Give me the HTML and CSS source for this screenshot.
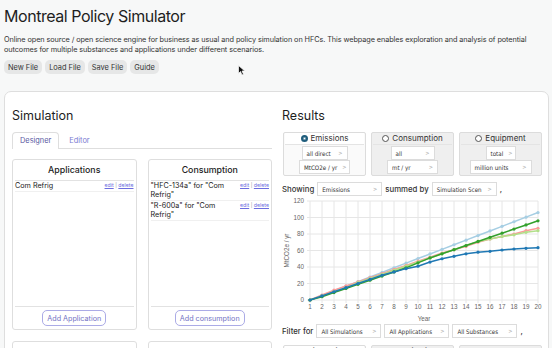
FILE: index.html
```html
<!DOCTYPE html>
<html>
<head>
<meta charset="utf-8">
<link rel="stylesheet" href="styles.css">
</head>
<body>
<header class="top">
  <h1 class="title">Montreal Policy Simulator</h1>
  <p class="intro">Online open source / open science engine for business as usual and policy simulation on HFCs. This webpage enables exploration and analysis of potential outcomes for multiple substances and applications under different scenarios.</p>
  <div class="file-buttons">
    <button class="file-btn">New File</button>
    <button class="file-btn">Load File</button>
    <button class="file-btn">Save File</button>
    <button class="file-btn">Guide</button>
  </div>
</header>

<main class="panel">
  <section class="col">
    <h2 class="heading">Simulation</h2>
    <div class="tabs">
      <span class="tab active">Designer</span>
      <span class="tab">Editor</span>
    </div>
    <div class="cards">
      <div class="card">
        <div class="card-title">Applications</div>
        <ul class="list">
          <li class="item"><span>Com Refrig</span><span class="links"><a>edit</a> | <a>delete</a></span></li>
        </ul>
        <div class="card-foot"><button class="add-btn">Add Application</button></div>
      </div>
      <div class="card">
        <div class="card-title">Consumption</div>
        <ul class="list">
          <li class="item"><span>"HFC-134a" for "Com Refrig"</span><span class="links"><a>edit</a> | <a>delete</a></span></li>
          <li class="item"><span>"R-600a" for "Com Refrig"</span><span class="links"><a>edit</a> | <a>delete</a></span></li>
        </ul>
        <div class="card-foot"><button class="add-btn">Add consumption</button></div>
      </div>
      <div class="card"></div>
      <div class="card"></div>
    </div>
  </section>

  <section class="col">
    <h2 class="heading">Results</h2>
    <div class="metrics">
      <div class="metric selected">
        <div class="metric-label"><span class="radio on"></span>Emissions</div>
        <span class="sel w46">all direct<i>&gt;</i></span>
        <span class="sel w51">MtCO2e / yr<i>&gt;</i></span>
      </div>
      <div class="metric">
        <div class="metric-label"><span class="radio"></span>Consumption</div>
        <span class="sel w44">all<i>&gt;</i></span>
        <span class="sel w51">mt / yr<i>&gt;</i></span>
      </div>
      <div class="metric">
        <div class="metric-label"><span class="radio"></span>Equipment</div>
        <span class="sel w30">total<i>&gt;</i></span>
        <span class="sel w62">million units<i>&gt;</i></span>
      </div>
    </div>

    <div class="query">
      <span class="q-label">Showing</span>
      <span class="sel wide">Emissions<i>&gt;</i></span>
      <span class="q-label">summed by</span>
      <span class="sel wide">Simulation Scen<i>&gt;</i></span>
      <span class="q-label">,</span>
    </div>

    <svg id="chart" class="chart" width="264" height="127" viewBox="0 0 264 127"></svg>

    <div class="query filter">
      <span class="q-label">Filter for</span>
      <span class="sel wide">All Simulations<i>&gt;</i></span>
      <span class="sel wide">All Applications<i>&gt;</i></span>
      <span class="sel wide">All Substances<i>&gt;</i></span>
      <span class="q-label">,</span>
    </div>

    <div class="metrics lower">
      <div class="metric selected">
        <div class="metric-label"><span class="radio on"></span>Simulations</div>
      </div>
      <div class="metric">
        <div class="metric-label"><span class="radio"></span>Applications</div>
      </div>
      <div class="metric">
        <div class="metric-label"><span class="radio"></span>Substances</div>
      </div>
    </div>
  </section>
</main>

<svg class="cursor" width="8" height="11" viewBox="0 0 8 11"><polygon points="0.5,0.5 0.5,8.5 2.5,6.5 4,10 5.5,9.3 4,6 6.8,6" fill="#111" stroke="#fff" stroke-width="0.7"/></svg>

<script src="chart.js"></script>
</body>
</html>
```

FILE: styles.css
```css
* { box-sizing: border-box; }
html, body { margin: 0; }
body {
  background: #f7f8f8;
  font-family: Inter, "Noto Sans", sans-serif;
  color: #222;
  width: 552px;
  height: 348px;
  overflow: hidden;
  padding: 0 3px 0 4px;
  position: relative;
}
.title {
  margin: 0;
  padding-top: 6px;
  font-size: 16px;
  line-height: 20px;
  font-weight: 400;
  letter-spacing: -0.45px;
  color: #1e1e1e;
}
.intro {
  margin: 9px 0 0;
  font-size: 7.3px;
  line-height: 9.5px;
  letter-spacing: -0.08px;
  color: #333;
}
.file-buttons {
  display: flex;
  gap: 3px;
  margin-top: 6px;
}
.file-btn {
  font-family: inherit;
  font-size: 7.4px;
  color: #333;
  background: #e6e7e7;
  border: none;
  border-radius: 5px;
  height: 14px;
  padding: 0 4px;
}
.panel {
  margin-top: 17px;
  background: #fff;
  border: 1px solid #dedede;
  border-radius: 7px;
  padding: 16px 7px 0;
  display: grid;
  grid-template-columns: 260px 260px;
  gap: 10px;
  height: 300px;
}
.heading {
  margin: 0;
  font-size: 12.5px;
  line-height: 16px;
  font-weight: 400;
  color: #1e1e1e;
}
.tabs {
  margin-top: 8px;
  display: flex;
  border-bottom: 1px solid #dedede;
  height: 17px;
}
.tab {
  font-size: 7.4px;
  line-height: 15px;
  color: #7b7bd2;
  padding: 0 9px;
  border: 1px solid transparent;
  border-bottom: none;
}
.tab.active {
  color: #58589f;
  border-color: #dedede;
  border-radius: 4px 4px 0 0;
  background: #fff;
  margin-bottom: -1px;
  padding: 0 7px;
}
.cards {
  margin-top: 10px;
  display: grid;
  grid-template-columns: 1fr 1fr;
  gap: 11px;
}
.card {
  height: 171px;
  border: 1px solid #dedede;
  border-radius: 3px;
  display: flex;
  flex-direction: column;
  padding: 0 2px;
}
.card-title {
  text-align: center;
  font-size: 8.8px;
  line-height: 12px;
  padding-top: 4px;
  padding-bottom: 4px;
  font-weight: 500;
  color: #222;
  border-bottom: 1px solid #e2e2e2;
}
.list {
  list-style: none;
  margin: 0;
  padding: 0;
  flex: 1;
}
.item {
  display: flex;
  justify-content: space-between;
  align-items: flex-start;
  font-size: 7.2px;
  line-height: 9px;
  padding: 0 0 1px;
  border-bottom: 1px solid #f0f0f0;
  color: #222;
}
.item span:first-child { max-width: 82px; }
.links {
  font-size: 5.2px;
  line-height: 9px;
  color: #999;
  white-space: nowrap;
}
.links a { color: #6d6de0; text-decoration: underline; }
.card-foot {
  border-top: 1px solid #e2e2e2;
  display: flex;
  justify-content: center;
  padding: 3px 0 3px;
}
.add-btn {
  font-family: inherit;
  font-size: 7.2px;
  color: #7272c4;
  background: #fff;
  border: 1px solid #ababe6;
  border-radius: 5px;
  height: 16px;
  padding: 0 4px;
}
.metrics {
  margin-top: 8px;
  display: grid;
  grid-template-columns: 83px 83px 83px;
  gap: 5px;
  padding-left: 1px;
}
.metric {
  height: 44px;
  border: 1px solid #dcdcdc;
  border-radius: 2px;
  background: #efefef;
  display: flex;
  flex-direction: column;
  align-items: center;
  padding: 0 1px;
}
.metric.selected { background: #fafafa; }
.metric-label {
  width: 100%;
  display: flex;
  align-items: center;
  justify-content: center;
  gap: 3px;
  font-size: 8px;
  line-height: 11px;
  color: #333;
  border-bottom: 1px solid #e4e4e4;
  margin-bottom: 1px;
}
.metric.selected .metric-label { background: #fff; }
.radio {
  width: 7px;
  height: 7px;
  border-radius: 50%;
  border: 1px solid #555;
  background: #fff;
}
.radio.on {
  border: 2px solid #1f5d7c;
  background: #fff;
  box-shadow: inset 0 0 0 0.5px #1f5d7c;
}
.sel {
  display: inline-flex;
  align-items: center;
  justify-content: space-between;
  height: 14px;
  padding: 0 4px;
  border: 1px solid #dcdcdc;
  background: #fff;
  font-family: "DejaVu Sans Condensed", "DejaVu Sans", sans-serif;
  font-stretch: condensed;
  font-size: 6.2px;
  color: #333;
  white-space: nowrap;
  overflow: hidden;
}
.sel i {
  font-style: normal;
  color: #aaa;
  font-size: 5.5px;
  margin-left: 5px;
}
.w30 { width: 30px; }
.w44 { width: 44px; }
.w46 { width: 46px; }
.w51 { width: 51px; }
.w62 { width: 62px; }
.wide { width: 65px; }
.query {
  margin-top: 6px;
  display: flex;
  align-items: center;
  gap: 3px;
}
.q-label {
  font-size: 7.8px;
  font-weight: 500;
  color: #333;
}
.chart { display: block; margin-top: 1px; }
.filter { margin-top: 0; }
.lower { margin-top: 7px; }
.cursor {
  position: absolute;
  left: 238px;
  top: 65px;
}
```

FILE: chart.js
```js
(function () {
  var svg = document.getElementById('chart');
  var NS = 'http://www.w3.org/2000/svg';
  var x0 = 28, dx = 12, yb = 103, sy = 99 / 120;
  function X(i) { return x0 + (i - 1) * dx; }
  function Y(v) { return yb - v * sy; }
  function el(tag, attrs, text) {
    var e = document.createElementNS(NS, tag);
    for (var k in attrs) e.setAttribute(k, attrs[k]);
    if (text !== undefined) e.textContent = text;
    svg.appendChild(e);
    return e;
  }
  var i, v;
  for (i = 1; i <= 20; i++) {
    el('line', { x1: X(i), x2: X(i), y1: Y(120), y2: yb + 3, stroke: '#e6e6e6', 'stroke-width': 1 });
    el('text', { x: X(i), y: 112, 'text-anchor': 'middle', 'font-size': 6.3, fill: '#666', 'font-family': 'Liberation Sans, Arial, sans-serif' }, String(i));
  }
  for (v = 0; v <= 120; v += 20) {
    el('line', { x1: X(1) - 3, x2: X(20), y1: Y(v), y2: Y(v), stroke: '#e6e6e6', 'stroke-width': 1 });
    el('text', { x: 22, y: Y(v) + 2.2, 'text-anchor': 'end', 'font-size': 6.3, fill: '#666', 'font-family': 'Liberation Sans, Arial, sans-serif' }, String(v));
  }
  el('text', { x: 142, y: 124, 'text-anchor': 'middle', 'font-size': 6.3, fill: '#666', 'font-family': 'Liberation Sans, Arial, sans-serif' }, 'Year');
  el('text', { x: 0, y: 0, 'text-anchor': 'middle', 'font-size': 6.3, fill: '#666', 'font-family': 'Liberation Sans, Arial, sans-serif', transform: 'translate(7,' + Y(60) + ') rotate(-90)' }, 'MtCO2e / yr');

  var lb = [];
  for (i = 0; i < 20; i++) lb.push(5.58 * i);
  var series = [
    { c: '#a6cee3', d: lb },
    { c: '#fb9a99', d: [0,6,12,17,22,27,32,37,42,47,52,57,61,65,70,74,77,80,84,87] },
    { c: '#b2df8a', d: [0,5,10,15,21,26,31,36,41,46,51,56,61,66,71,74,77,79,82,84] },
    { c: '#33a02c', d: [0,4,9,14,19,24,29,34,39,45,51,56,61,66,71,76,81,86,91,96] },
    { c: '#1f78b4', d: [0,5,10,15,20,25,30,34,38,41,46,50,53,56,58,59,60.6,61.8,62.6,63.4] }
  ];
  series.forEach(function (s) {
    var pts = s.d.map(function (val, k) { return X(k + 1) + ',' + Y(val).toFixed(2); }).join(' ');
    el('polyline', { points: pts, fill: 'none', stroke: s.c, 'stroke-width': 1.5 });
    s.d.forEach(function (val, k) {
      el('circle', { cx: X(k + 1), cy: Y(val).toFixed(2), r: 1.6, fill: s.c });
    });
  });
})();
```
